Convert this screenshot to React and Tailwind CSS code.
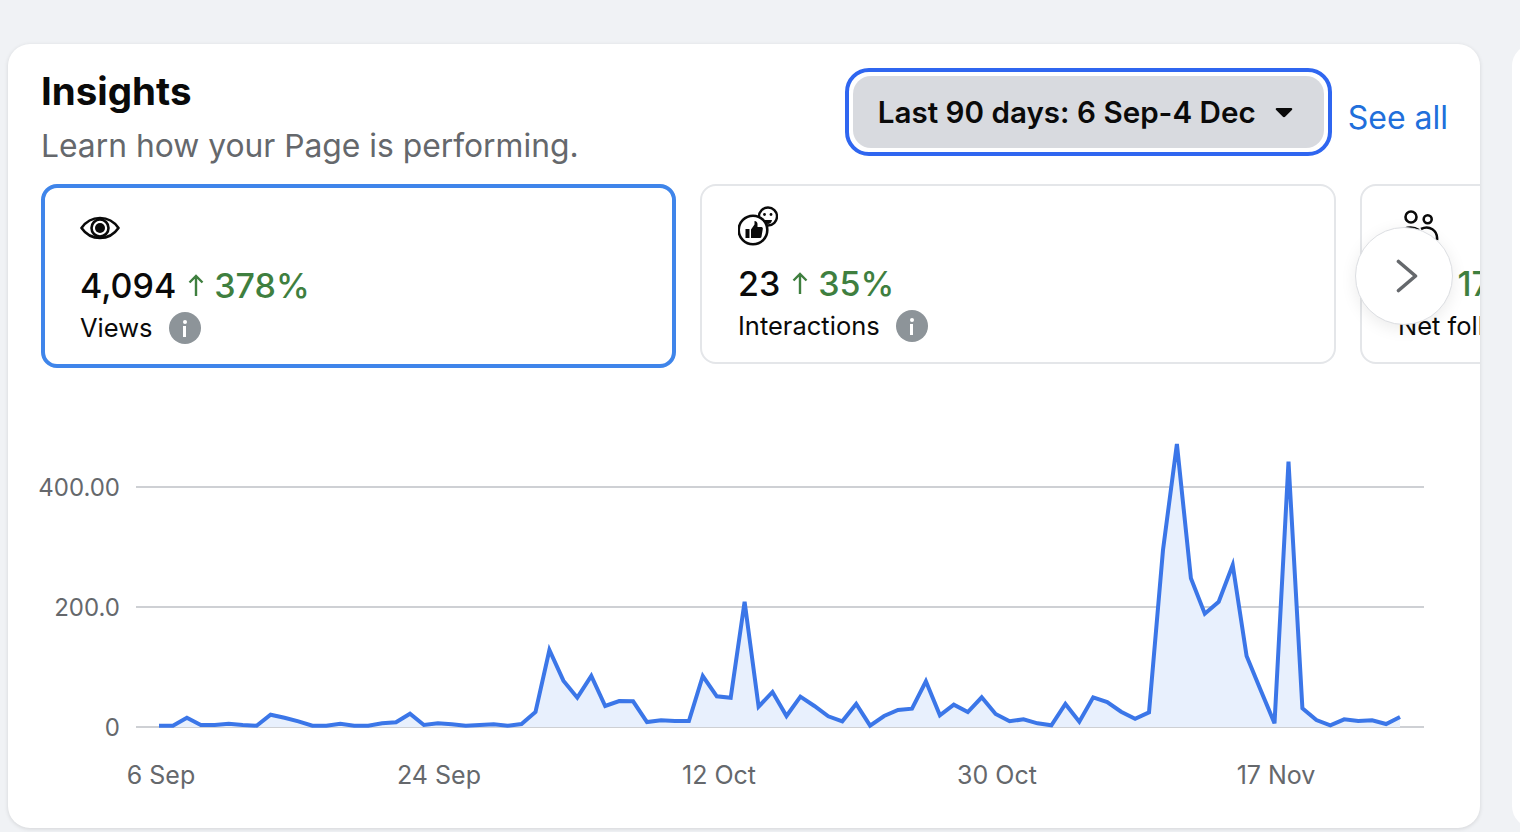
import { useState } from 'react'

const FONT = { fontFamily: 'Inter, "Noto Sans", sans-serif' }

// chart points read off the picture, y in page pixels
const YS = [
  725.7, 725.7, 717.7, 725, 725, 723.7, 725, 725.7, 714.7, 717.7,
  721.3, 725.7, 725.7, 723.7, 725.7, 725.7, 723.3, 722.3, 713.7, 725,
  723.3, 724.3, 725.7, 725, 724.3, 725.7, 724, 712, 650, 680.7,
  697.7, 676, 706, 701, 701.3, 722, 720.3, 721, 721, 676,
  696.3, 697.7, 601.7, 706.7, 692, 716, 696.7, 706, 716.3, 721.3,
  704, 725.7, 716, 710, 708.7, 681.3, 715.3, 704.7, 712, 697.3,
  714, 721.3, 719.3, 723.3, 725.3, 704, 721.7, 697.3, 702, 711.7,
  718.7, 712.3, 550, 444, 578.3, 613.7, 601.7, 565, 656, 690,
  723.3, 461.7, 708.3, 720, 725.3, 719.3, 721, 720.3, 724, 717,
]
const POINTS = YS.map((y, i) => `${(159 + i * 13.944).toFixed(1)},${y}`).join(' ')

const GRID = [
  { y: 487, label: '400.00' },
  { y: 607, label: '200.0' },
  { y: 727, label: '0' },
]

const DATES = [
  { x: 161, label: '6 Sep' },
  { x: 439, label: '24 Sep' },
  { x: 719, label: '12 Oct' },
  { x: 997, label: '30 Oct' },
  { x: 1276, label: '17 Nov' },
]

function EyeIcon() {
  return (
    <svg width="40" height="40" viewBox="0 0 40 40" fill="none" stroke="#0a0a0a">
      <path d="M1.5 20 C6 13.5 12.5 10 20 10 C27.5 10 34 13.5 38.5 20 C34 26.5 27.5 30 20 30 C12.5 30 6 26.5 1.5 20 Z" strokeWidth="2.6" strokeLinejoin="round" />
      <circle cx="20" cy="20" r="8.5" strokeWidth="2.6" />
      <circle cx="20" cy="20" r="5" fill="#0a0a0a" stroke="none" />
    </svg>
  )
}

function ReactionIcon() {
  return (
    <svg width="40" height="40" viewBox="0 0 40 40" fill="none" stroke="#0a0a0a">
      <circle cx="30" cy="10.5" r="9" strokeWidth="2.4" />
      <circle cx="26.5" cy="8.5" r="1.4" fill="#0a0a0a" stroke="none" />
      <circle cx="33" cy="8.5" r="1.4" fill="#0a0a0a" stroke="none" />
      <path d="M26 14 H34 C33.5 17 31.5 18 30 18 C28.5 18 26.5 17 26 14 Z" fill="#0a0a0a" stroke="none" />
      <circle cx="15" cy="24" r="14.3" fill="#fff" strokeWidth="2.6" />
      <rect x="7.5" y="23" width="4" height="9" fill="#0a0a0a" stroke="none" />
      <path d="M13 23.5 L16.5 18.5 V15 C18.5 15 19.5 16.5 19.5 18 V21 H23.5 C24.5 21 25 22 24.8 23 L23.5 30.5 C23.3 31.5 22.5 32 21.5 32 H13 Z" fill="#0a0a0a" stroke="none" />
    </svg>
  )
}

function PeopleIcon() {
  return (
    <svg className="ml-px" width="40" height="40" viewBox="0 0 40 40" fill="none" stroke="#0a0a0a" strokeWidth="2.6">
      <circle cx="12" cy="11" r="5.5" />
      <circle cx="28.7" cy="13.3" r="4" />
      <path d="M5 23 C10 21 15 21 20 24" />
      <path d="M22 23 C30 19 39 24 38 34" />
    </svg>
  )
}

function InfoDot() {
  return (
    <span className="flex h-8 w-8 shrink-0 flex-col items-center justify-center rounded-full bg-[#8d9499]">
      <span className="h-[4px] w-[4px] rounded-full bg-white" />
      <span className="mt-[2px] h-[11px] w-[3.5px] bg-white" />
    </span>
  )
}

function Metric({ icon, value, change, label, selected }) {
  return (
    <div
      className={
        selected
          ? 'h-[184px] w-[635px] shrink-0 rounded-[16px] border-[4px] border-[#3f85ea] pl-[35px] pt-[20px]'
          : 'h-[180px] w-[636px] shrink-0 rounded-[16px] border-2 border-[#e4e6e9] pl-[36px] pt-[20px]'
      }
    >
      <div className="flex h-10 items-center">{icon}</div>
      <div className="mt-[15px] flex h-11 items-center text-[34px] font-medium text-[#0a0a0a]">
        <span>{value}</span>
        <svg className="ml-[11px] mr-[9px]" width="18" height="24" viewBox="0 0 18 24" fill="none" stroke="#3f7f3f" strokeWidth="2.4">
          <path d="M9 23 V3 M2.5 9.5 L9 3 L15.5 9.5" />
        </svg>
        <span className="text-[#3f7f3f]">{change}</span>
      </div>
      <div className="mt-[3px] flex h-9 items-center gap-[16px] whitespace-nowrap text-[25.5px] text-[#0a0a0a]">
        <span>{label}</span>
        <InfoDot />
      </div>
    </div>
  )
}

export default function App() {
  const [range] = useState('Last 90 days: 6 Sep-4 Dec')

  return (
    <div style={FONT} className="flex h-screen gap-8 overflow-hidden bg-[#f0f2f5] pl-2 pt-11">
      <div className="relative h-[784px] w-[1472px] shrink-0 overflow-hidden rounded-[22px] bg-white shadow-[0_1px_4px_rgba(0,0,0,0.12)]">
        <div className="flex items-start justify-between pl-[33px] pr-[32px]">
          <div>
            <h1 className="mt-[22px] text-[38.5px] font-bold leading-[50px] text-[#0a0a0a]">Insights</h1>
            <p className="mt-[7px] text-[31.8px] leading-[46px] text-[#65686c]">Learn how your Page is performing.</p>
          </div>
          <div className="mt-[24px] flex items-center gap-[16px]">
            <button className="flex h-[88px] w-[487px] items-center rounded-[24px] border-[4px] border-[#2f66f0] p-[4px]">
              <span className="flex h-full w-full items-center justify-between rounded-[18px] bg-[#d8dadf] pl-[25px] pr-[31px] pt-[1px] text-[29.6px] font-semibold text-[#0a0a0a]">
                {range}
                <svg width="18" height="11" viewBox="0 0 20 12">
                  <path d="M2 1 H18 C19 1 19.5 2 19 3 L11.5 10.5 C10.500 11.5 9.5 11.5 8.5 10.5 L1 3 C0.5 2 1 1 2 1 Z" fill="#0a0a0a" />
                </svg>
              </span>
            </button>
            <a className="mt-3 text-[32px] text-[#216fdb]">See all</a>
          </div>
        </div>

        <div className="mt-[15px] flex items-start gap-6 pl-[33px]">
          <Metric selected icon={<EyeIcon />} value="4,094" change="378%" label="Views" />
          <Metric icon={<ReactionIcon />} value="23" change="35%" label="Interactions" />
          <Metric icon={<PeopleIcon />} value="6" change="17%" label="Net followers" />
        </div>

        <button className="absolute left-[1347px] top-[183px] flex h-[98px] w-[98px] items-center justify-center rounded-full border border-[#dcdee2] bg-white shadow-[0_4px_16px_rgba(0,0,0,0.08)]">
          <svg className="ml-[6px]" width="22" height="34" viewBox="0 0 22 34" fill="none" stroke="#65686c" strokeWidth="3.6" strokeLinecap="round" strokeLinejoin="round">
            <path d="M2.5 2.5 L19.5 17 L2.5 31.5" />
          </svg>
        </button>

        <svg className="mt-[32px] block" width="1472" height="428" viewBox="8 400 1472 428" style={FONT}>
          {GRID.map(g => (
            <g key={g.y}>
              <line x1="136" x2="1424" y1={g.y} y2={g.y} stroke="#ced0d4" strokeWidth="2" />
              <text x="120" y={g.y + 9} textAnchor="end" fontSize="24" fill="#65686c">{g.label}</text>
            </g>
          ))}
          <polygon points={`159,727 ${POINTS} 1400,727`} fill="#e8f0fd" />
          <polyline points={POINTS} fill="none" stroke="#3b76e8" strokeWidth="4" />
          {DATES.map(d => (
            <text key={d.label} x={d.x} y="784" textAnchor="middle" fontSize="25" fill="#65686c">{d.label}</text>
          ))}
        </svg>
      </div>
      <div className="h-[784px] w-[400px] shrink-0 rounded-[22px] bg-white" />
    </div>
  )
}
